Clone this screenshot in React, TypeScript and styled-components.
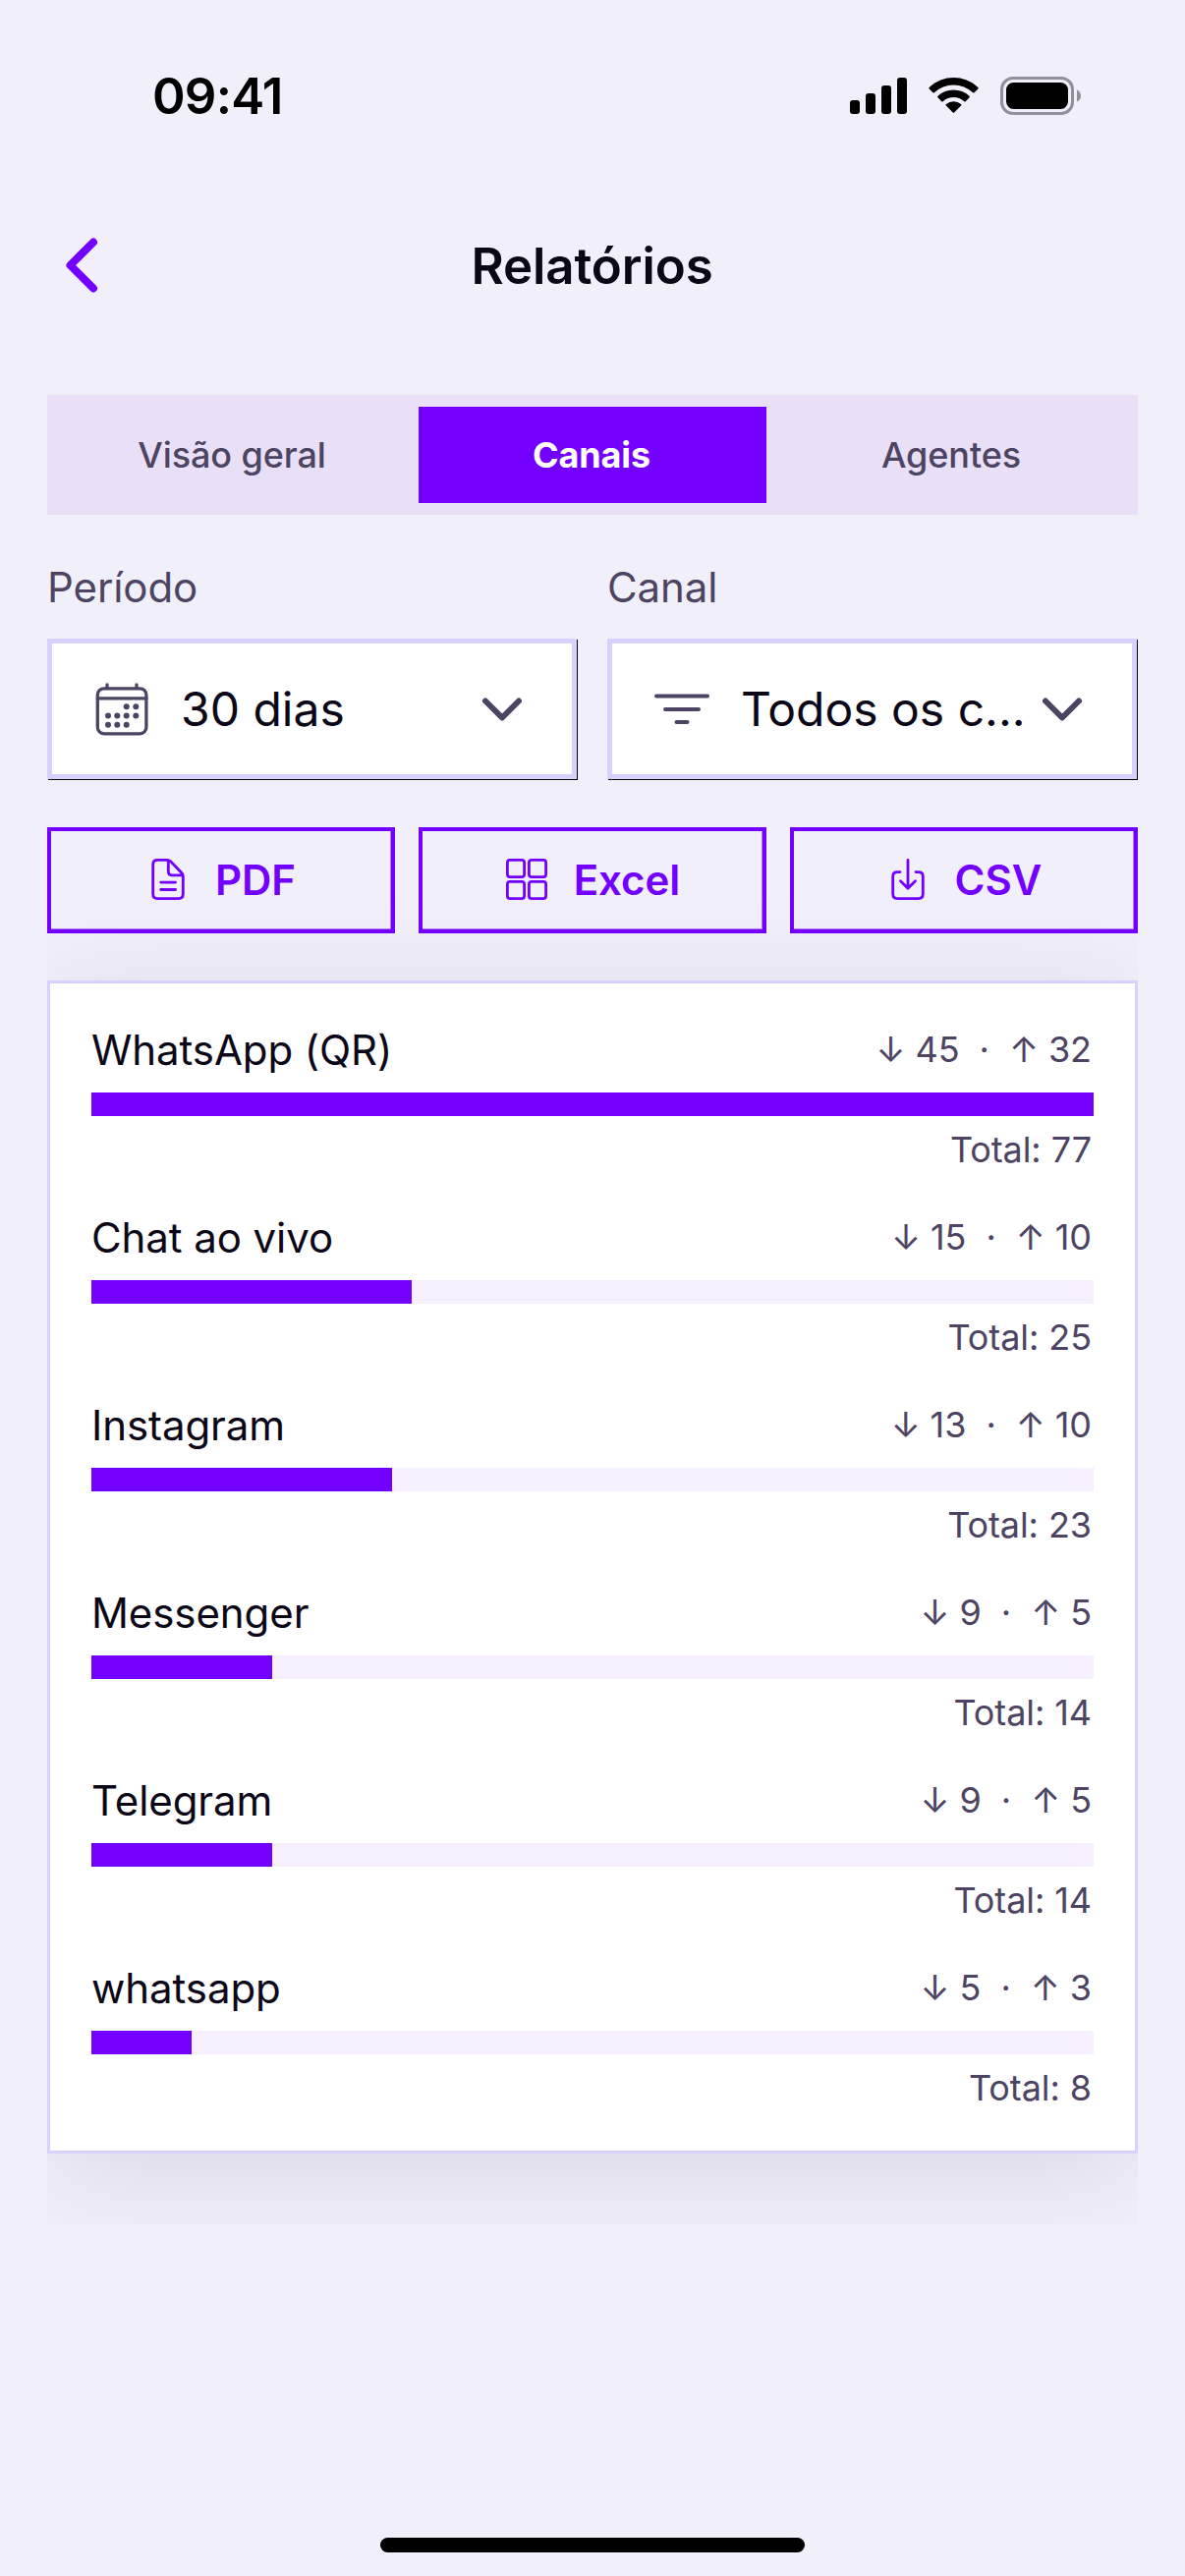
import React from "react";
import styled, { createGlobalStyle } from "styled-components";

const violet = "#7300ff";
const ink = "#0b0717";
const muted = "#4c4462";
const line = "#d8d0fd";

const Global = createGlobalStyle`
  html, body { margin: 0; padding: 0; background: #f1effa; }
  * { box-sizing: border-box; }
  body { font-family: Inter, "Liberation Sans", sans-serif; -webkit-font-smoothing: antialiased; }
  button { font: inherit; border: 0; background: none; padding: 0; margin: 0; }
  svg { display: block; flex: none; overflow: visible; }
`;

const Screen = styled.main`
  width: 1206px;
  height: 2622px;
  display: flex;
  flex-direction: column;
  background: #f1effa;
  overflow: hidden;
`;

const StatusBar = styled.div`
  height: 186px;
  padding: 9px 106px 0 155px;
  display: flex;
  justify-content: space-between;
  align-items: center;
`;

const Clock = styled.time`
  font-size: 51px;
  font-weight: 600;
  line-height: 61px;
  letter-spacing: -0.8px;
  color: #000;
`;

const StatusIcons = styled.div`
  display: flex;
  align-items: center;
  gap: 22px;
`;

const Header = styled.header`
  height: 168px;
  padding: 0 49px 0 48px;
  display: grid;
  grid-template-columns: 120px 1fr 120px;
  align-items: center;
`;

const BackButton = styled.button`
  padding-left: 17px;
  padding-bottom: 1px;
`;

const Title = styled.h1`
  margin: 0;
  padding-top: 2px;
  text-align: center;
  font-size: 51px;
  line-height: 62px;
  font-weight: 600;
  letter-spacing: -0.1px;
  color: ${ink};
`;

const Content = styled.div`
  margin: 48px 48px 0;
  padding-bottom: 72px;
  overflow: hidden;
`;

const Tabs = styled.nav`
  display: grid;
  grid-template-columns: repeat(3, 1fr);
  gap: 12px;
  padding: 12px;
  background: #e9dff7;
`;

const Tab = styled.button<{ $active?: boolean }>`
  height: 98px;
  padding-right: 2px;
  font-size: 36px;
  letter-spacing: -0.1px;
  font-weight: ${(p) => (p.$active ? 700 : 500)};
  color: ${(p) => (p.$active ? "#fff" : muted)};
  background: ${(p) => (p.$active ? violet : "transparent")};
`;

const Filters = styled.div`
  display: grid;
  grid-template-columns: 1fr 1fr;
  gap: 30px;
  margin-top: 48px;
`;

const Field = styled.div`
  display: flex;
  flex-direction: column;
  gap: 27px;
  min-width: 0;
`;

const Label = styled.span`
  font-size: 42px;
  line-height: 51px;
  letter-spacing: -0.1px;
  color: ${muted};
`;

const Select = styled.button`
  height: 143px;
  margin: 0 1px 1px 0;
  padding: 0 50px 0 44px;
  display: flex;
  align-items: center;
  background: #fff;
  border: 5px solid ${line};
  box-shadow: 1px 1px 0 #000;
`;

const SelectText = styled.span`
  flex: 1;
  min-width: 0;
  margin: 0 8px 0 33px;
  text-align: left;
  font-size: 48px;
  line-height: 58px;
  color: ${ink};
  white-space: nowrap;
`;

const Exports = styled.div`
  display: grid;
  grid-template-columns: repeat(3, 1fr);
  gap: 24px;
  margin-top: 48px;
`;

const ExportButton = styled.button`
  height: 108px;
  padding: 0 2px 2px 0;
  display: flex;
  align-items: center;
  justify-content: center;
  gap: 24px;
  border: 4px solid ${violet};
  box-shadow: inset -1px -1px 0 rgba(115, 0, 255, 0.5);
  font-size: 42px;
  font-weight: 600;
  color: ${violet};
`;

const Card = styled.section`
  margin-top: 48px;
  padding: 42px;
  display: flex;
  flex-direction: column;
  gap: 42px;
  background: #fff;
  border: 3px solid ${line};
  box-shadow: 0 18px 108px rgba(0, 0, 0, 0.1);
`;

const Channel = styled.article`
  display: flex;
  flex-direction: column;
`;

const ChannelTop = styled.div`
  display: flex;
  justify-content: space-between;
  align-items: flex-start;
  height: 51px;
`;

const Name = styled.span`
  font-size: 42px;
  line-height: 51px;
  letter-spacing: -0.08px;
  color: ${ink};
`;

const Meta = styled.span`
  padding-right: 2px;
  font-size: 36px;
  line-height: 44px;
  letter-spacing: -0.08px;
  color: ${muted};
  white-space: pre;
`;

const Counts = styled(Meta)`
  line-height: 50px;
`;

const Total = styled(Meta)`
  text-align: right;
`;

const Track = styled.div`
  height: 24px;
  margin: 18px 0 12px;
  background: #f6effe;
`;

const Fill = styled.div`
  height: 24px;
  background: ${violet};
`;

const HomeArea = styled.footer`
  margin-top: auto;
  padding-bottom: 24px;
  display: flex;
  justify-content: center;
`;

const HomeBar = styled.div`
  width: 432px;
  height: 15px;
  border-radius: 8px;
  background: #000;
`;

const Signal = () => (
  <svg width="58" height="37" viewBox="0 0 58 37">
    <rect x="0" y="23" width="10" height="14" rx="3" />
    <rect x="16" y="16" width="10" height="21" rx="3" />
    <rect x="32" y="8" width="10" height="29" rx="3" />
    <rect x="48" y="0" width="10" height="37" rx="3" />
  </svg>
);

const Wifi = () => (
  <svg width="51" height="37" viewBox="0 0 17 12.33">
    <path d="M8.57 2.47c2.43 0 4.78.93 6.54 2.6.13.13.34.13.48 0l1.27-1.28a.35.35 0 0 0 0-.5c-4.63-4.43-11.94-4.43-16.57 0a.35.35 0 0 0 0 .5l1.27 1.28c.13.13.34.13.48 0a9.5 9.5 0 0 1 6.53-2.6Zm0 4.22c1.33 0 2.62.5 3.6 1.38.14.13.35.13.48 0l1.27-1.29a.35.35 0 0 0 0-.5 7.8 7.8 0 0 0-10.7 0 .35.35 0 0 0 0 .5l1.27 1.29c.13.13.35.13.48 0a5.4 5.4 0 0 1 3.6-1.38Zm2.54 2.82a.34.34 0 0 0-.01-.5 3.9 3.9 0 0 0-5.07 0 .34.34 0 0 0-.01.5l2.3 2.32a.35.35 0 0 0 .49 0l2.3-2.32Z" transform="translate(-.07 0)" />
  </svg>
);

const Battery = () => (
  <svg width="82" height="39" viewBox="0 0 82 39">
    <rect x="1.5" y="1.5" width="72" height="36" rx="11.5" fill="none" stroke="#918f98" strokeWidth="3" />
    <rect x="6" y="6" width="63" height="27" rx="7.5" />
    <path d="M78 13.5c2.4 1 4 3.3 4 6s-1.6 5-4 6z" fill="#918f98" />
  </svg>
);

const ChevronLeft = () => (
  <svg width="36" height="58" viewBox="0 0 36 58" fill="none" stroke={violet} strokeWidth="8" strokeLinecap="round" strokeLinejoin="round">
    <path d="M30 5.5 6.5 29 30 52.5" />
  </svg>
);

const ChevronDown = () => (
  <svg width="42" height="26" viewBox="0 0 42 26" fill="none" stroke={muted} strokeWidth="6" strokeLinecap="round" strokeLinejoin="round">
    <path d="M4 4.5 21 21.5 38 4.5" />
  </svg>
);

const dots = [
  [31.7, 24.2], [41.3, 24.2],
  [13, 33.5], [22.3, 33.5], [31.7, 33.5], [41.3, 33.5],
  [13, 42.8], [22.3, 42.8], [31.7, 42.8],
];

const Calendar = () => (
  <svg width="54" height="54" viewBox="0 0 54 54" fill="none" stroke={muted} strokeWidth="3.3" strokeLinecap="round">
    <rect x="2.3" y="5.8" width="49.6" height="46" rx="6.5" />
    <path d="M2.3 15.8h49.6M12 2v3M42 2v3" />
    <g fill={muted} stroke="none">
      {dots.map(([x, y]) => <circle key={`${x}-${y}`} cx={x} cy={y} r="3" />)}
    </g>
  </svg>
);

const Filter = () => (
  <svg width="54" height="54" viewBox="2 0 54 54" fill="none" stroke={muted} strokeWidth="4" strokeLinecap="round">
    <path d="M3 13.5h52M12 27h34M23.5 40h11" />
  </svg>
);

const iconProps = {
  width: 48,
  height: 48,
  viewBox: "0 0 48 48",
  fill: "none",
  stroke: violet,
  strokeWidth: 2.8,
  strokeLinecap: "round",
  strokeLinejoin: "round",
} as const;

const FileIcon = () => (
  <svg {...iconProps}>
    <path d="M13.2 4.4h10q2 0 3.4 1.4l11.3 11.7q1.4 1.4 1.4 3.4v18.2q0 4.5-4.5 4.5H13.2q-4.5 0-4.5-4.5V8.9q0-4.5 4.5-4.5ZM24.3 4.8v11.5q0 3.5 3.5 3.5h11.2M16.7 27.1h14.9M16.7 34.5h14.9" />
  </svg>
);

const GridIcon = () => (
  <svg {...iconProps}>
    <rect x="4.4" y="4.4" width="17.2" height="17.2" rx="2.5" />
    <rect x="26.4" y="4.4" width="17.2" height="17.2" rx="2.5" />
    <rect x="4.4" y="26.4" width="17.2" height="17.2" rx="2.5" />
    <rect x="26.4" y="26.4" width="17.2" height="17.2" rx="2.5" />
  </svg>
);

const DownloadIcon = () => (
  <svg {...iconProps}>
    <path d="M16 16.6h-2.8q-4.5 0-4.5 4.5v18q0 4.5 4.5 4.5h21.6q4.5 0 4.5-4.5v-18q0-4.5-4.5-4.5H32M24 4.4v28.6M16.5 25.8l7.5 7.5 7.5-7.5" />
  </svg>
);

const channels = [
  { name: "WhatsApp (QR)", inbound: 45, outbound: 32 },
  { name: "Chat ao vivo", inbound: 15, outbound: 10 },
  { name: "Instagram", inbound: 13, outbound: 10 },
  { name: "Messenger", inbound: 9, outbound: 5 },
  { name: "Telegram", inbound: 9, outbound: 5 },
  { name: "whatsapp", inbound: 5, outbound: 3 },
];

const highest = Math.max(...channels.map((c) => c.inbound + c.outbound));

export default function App() {
  return (
    <Screen>
      <Global />
      <StatusBar>
        <Clock>09:41</Clock>
        <StatusIcons>
          <Signal />
          <Wifi />
          <Battery />
        </StatusIcons>
      </StatusBar>
      <Header>
        <BackButton aria-label="Voltar"><ChevronLeft /></BackButton>
        <Title>Relatórios</Title>
      </Header>
      <Content>
        <Tabs>
          <Tab>Visão geral</Tab>
          <Tab $active>Canais</Tab>
          <Tab>Agentes</Tab>
        </Tabs>
        <Filters>
          <Field>
            <Label>Período</Label>
            <Select><Calendar /><SelectText>30 dias</SelectText><ChevronDown /></Select>
          </Field>
          <Field>
            <Label>Canal</Label>
            <Select><Filter /><SelectText>Todos os c...</SelectText><ChevronDown /></Select>
          </Field>
        </Filters>
        <Exports>
          <ExportButton><FileIcon />PDF</ExportButton>
          <ExportButton><GridIcon />Excel</ExportButton>
          <ExportButton><DownloadIcon />CSV</ExportButton>
        </Exports>
        <Card>
          {channels.map((c) => {
            const total = c.inbound + c.outbound;
            return (
              <Channel key={c.name}>
                <ChannelTop>
                  <Name>{c.name}</Name>
                  <Counts>{`↓ ${c.inbound}  ·  ↑ ${c.outbound}`}</Counts>
                </ChannelTop>
                <Track>
                  <Fill style={{ width: `${Math.round((total / highest) * 100)}%` }} />
                </Track>
                <Total>{`Total: ${total}`}</Total>
              </Channel>
            );
          })}
        </Card>
      </Content>
      <HomeArea><HomeBar /></HomeArea>
    </Screen>
  );
}
